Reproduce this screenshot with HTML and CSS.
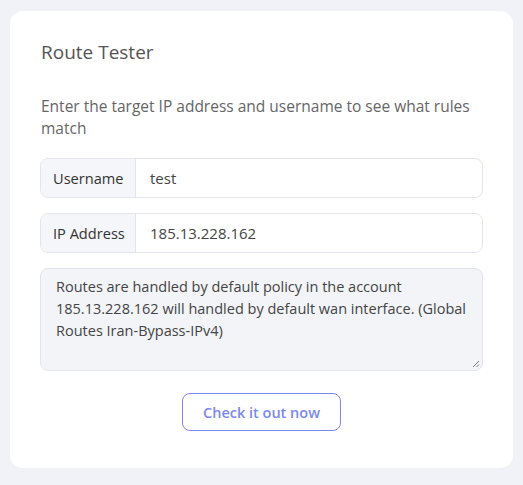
FILE: index.html
```html
<!DOCTYPE html>
<html>
<head>
<meta charset="utf-8">
<link rel="stylesheet" href="styles.css">
</head>
<body>
<div class="card">
  <h2 class="title">Route Tester</h2>
  <p class="desc">Enter the target IP address and username to see what rules match</p>
  <div class="group">
    <span class="label">Username</span>
    <span class="value">test</span>
  </div>
  <div class="group">
    <span class="label">IP Address</span>
    <span class="value">185.13.228.162</span>
  </div>
  <div class="result">
    <div class="result-text">Routes are handled by default policy in the account 185.13.228.162 will handled by default wan interface. (Global Routes Iran-Bypass-IPv4)</div>
    <svg class="grip" width="8" height="8" viewBox="0 0 8 8"><path d="M7 1 L1 7 M7 4.5 L4.5 7" stroke="#777" stroke-width="1" fill="none"/></svg>
  </div>
  <div class="actions">
    <button class="btn">Check it out now</button>
  </div>
</div>
</body>
</html>
```
FILE: styles.css
```css
html, body {
  margin: 0;
  padding: 0;
  background: #f1f2f7;
}
body {
  padding: 11px 10px 17px 10px;
  font-family: "Open Sans", sans-serif;
  color: #5a5a5a;
}
.card {
  background: #ffffff;
  border-radius: 13px;
  padding: 28px 30px 36px 30px;
  height: 393px;
}
.title {
  margin: 0 0 0 1px;
  font-size: 19px;
  font-weight: 500;
  color: #555;
  line-height: 26px;
}
.desc {
  margin: 30px 0 0 1px;
  font-size: 15.5px;
  line-height: 22px;
  color: #666;
}
.group {
  display: flex;
  height: 40px;
  box-sizing: border-box;
  border: 1px solid #e4e4ee;
  border-radius: 8px;
  margin-top: 19px;
  overflow: hidden;
}
.group + .group {
  margin-top: 15px;
}
.label {
  display: flex;
  align-items: center;
  background: #f5f6f9;
  border-right: 1px solid #e4e4ee;
  padding: 0 6px 0 12px;
  width: 95px;
  box-sizing: border-box;
  font-size: 14.6px;
  color: #333;
  white-space: nowrap;
}
.value {
  display: flex;
  align-items: center;
  padding-left: 14px;
  font-size: 15px;
  color: #444;
}
.result {
  position: relative;
  margin-top: 15px;
  height: 103px;
  box-sizing: border-box;
  background: #f3f4f8;
  border: 1px solid #e4e4ee;
  border-radius: 8px;
  padding: 7px 6px 7px 15px;
}
.result-text {
  font-size: 14.5px;
  line-height: 22px;
  color: #444;
}
.grip {
  position: absolute;
  right: 2px;
  bottom: 2px;
}
.actions {
  display: flex;
  justify-content: center;
  margin-top: 22px;
}
.btn {
  width: 159px;
  height: 38px;
  background: #fff;
  border: 1px solid #7b88ee;
  border-radius: 8px;
  color: #7b89f0;
  font-family: inherit;
  font-size: 14.5px;
  font-weight: 600;
  cursor: pointer;
}
```
